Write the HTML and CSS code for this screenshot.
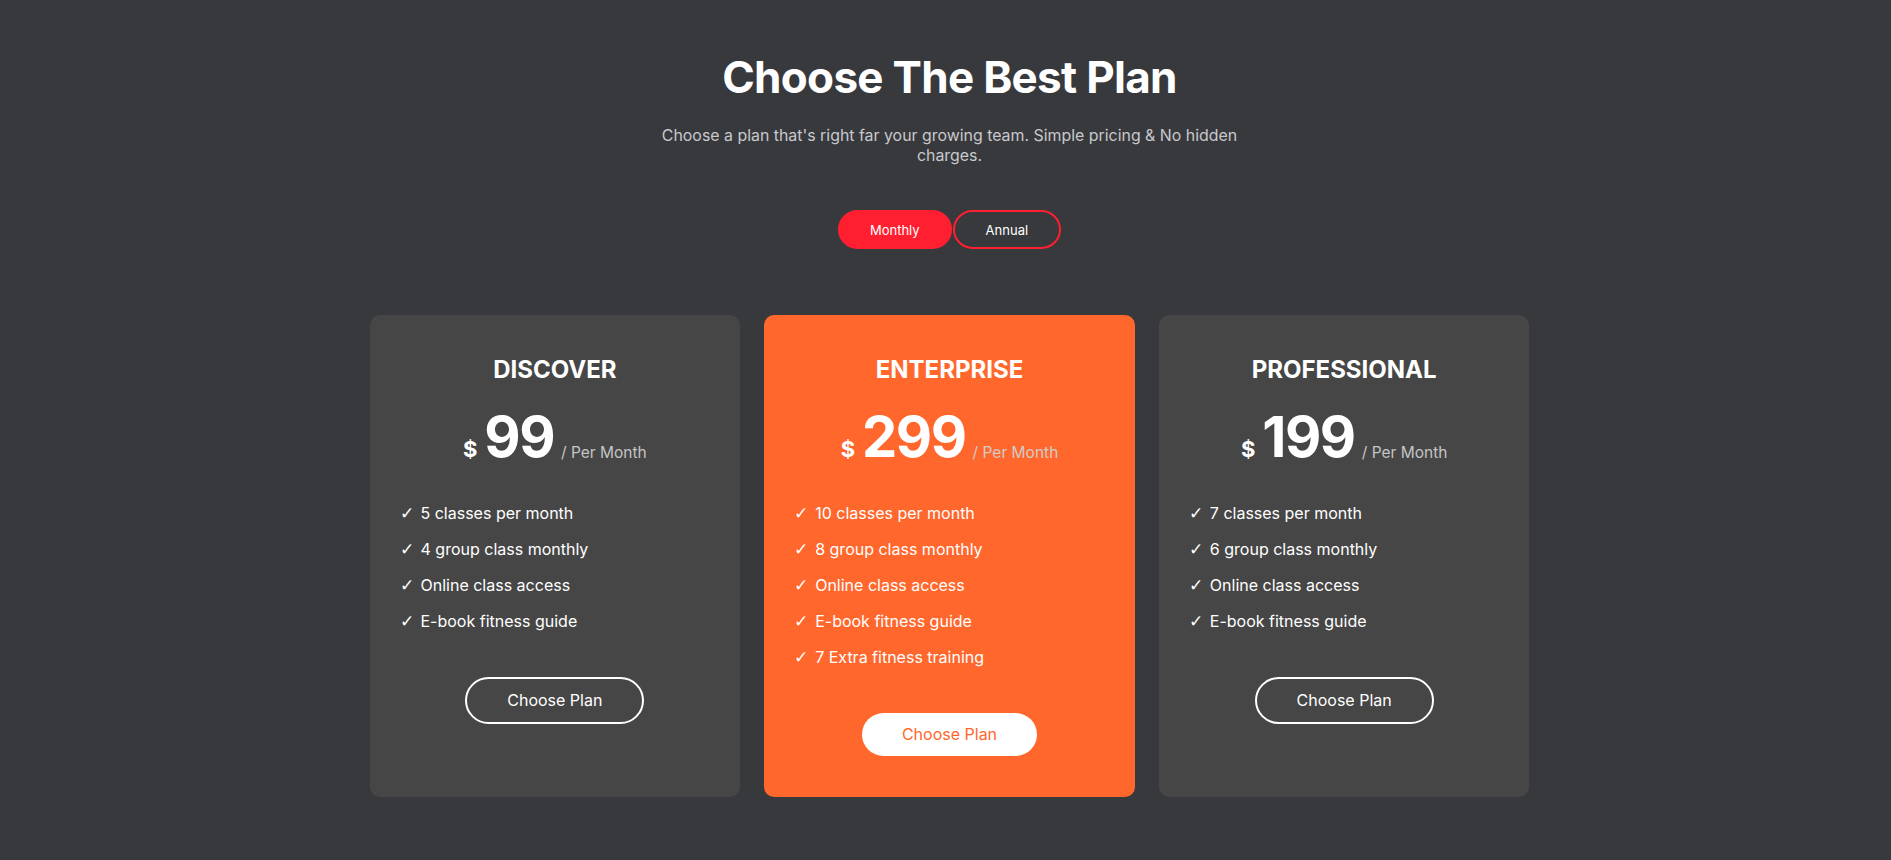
FILE: index.html
```html
<!DOCTYPE html>
<html lang="en">
<head>
<meta charset="utf-8">
<title>Pricing</title>
<link rel="stylesheet" href="styles.css">
</head>
<body>
<main class="page">
  <header class="intro">
    <h1 class="intro-title">Choose The Best Plan</h1>
    <p class="intro-text">Choose a plan that's right far your growing team. Simple pricing &amp; No hidden charges.</p>
    <div class="toggle">
      <button class="toggle-btn is-active">Monthly</button>
      <button class="toggle-btn">Annual</button>
    </div>
  </header>

  <section class="plans">
    <article class="plan">
      <h2 class="plan-name">DISCOVER</h2>
      <div class="plan-price"><span class="currency">$</span><span class="amount">99</span><span class="period">/ Per Month</span></div>
      <ul class="features">
        <li><span class="check">✓</span>5 classes per month</li>
        <li><span class="check">✓</span>4 group class monthly</li>
        <li><span class="check">✓</span>Online class access</li>
        <li><span class="check">✓</span>E-book fitness guide</li>
      </ul>
      <button class="plan-btn">Choose Plan</button>
    </article>

    <article class="plan plan-featured">
      <h2 class="plan-name">ENTERPRISE</h2>
      <div class="plan-price"><span class="currency">$</span><span class="amount">299</span><span class="period">/ Per Month</span></div>
      <ul class="features">
        <li><span class="check">✓</span>10 classes per month</li>
        <li><span class="check">✓</span>8 group class monthly</li>
        <li><span class="check">✓</span>Online class access</li>
        <li><span class="check">✓</span>E-book fitness guide</li>
        <li><span class="check">✓</span>7 Extra fitness training</li>
      </ul>
      <button class="plan-btn">Choose Plan</button>
    </article>

    <article class="plan">
      <h2 class="plan-name">PROFESSIONAL</h2>
      <div class="plan-price"><span class="currency">$</span><span class="amount">199</span><span class="period">/ Per Month</span></div>
      <ul class="features">
        <li><span class="check">✓</span>7 classes per month</li>
        <li><span class="check">✓</span>6 group class monthly</li>
        <li><span class="check">✓</span>Online class access</li>
        <li><span class="check">✓</span>E-book fitness guide</li>
      </ul>
      <button class="plan-btn">Choose Plan</button>
    </article>
  </section>
</main>
</body>
</html>
```

FILE: styles.css
```css
* {
  box-sizing: border-box;
}

html, body {
  margin: 0;
  padding: 0;
  background: #38393d;
}

body {
  font-family: Inter, "Noto Sans", "Liberation Sans", sans-serif;
  color: #ffffff;
  min-height: 860px;
}

.page {
  padding: 51px 0 40px 8px;
}

.intro {
  display: flex;
  flex-direction: column;
  align-items: center;
  text-align: center;
}

.intro-title {
  margin: 0;
  font-size: 44px;
  font-weight: 700;
  line-height: 53px;
  letter-spacing: -0.7px;
}

.intro-text {
  margin: 22px 0 0;
  max-width: 600px;
  font-size: 15.9px;
  line-height: 19.5px;
  color: #c7c8cc;
}

.toggle {
  display: flex;
  gap: 1px;
  margin-top: 45px;
}

.toggle-btn {
  height: 39px;
  padding: 0 31px;
  border: 2px solid #ff1f30;
  border-radius: 20px;
  background: transparent;
  color: #ffffff;
  font-family: inherit;
  font-size: 13px;
  cursor: pointer;
}

.toggle-btn.is-active {
  background: #ff1f30;
  padding: 0 30px;
}

.plans {
  display: grid;
  grid-template-columns: repeat(3, 1fr);
  gap: 24px;
  max-width: 1160px;
  margin: 66px auto 0;
}

.plan {
  display: flex;
  flex-direction: column;
  align-items: center;
  padding: 40px 30px 41px;
  background: #464646;
  border-radius: 10px;
}

.plan-featured {
  background: #ff672d;
}

.plan-name {
  margin: 0;
  font-size: 24px;
  font-weight: 700;
  line-height: 29px;
}

.plan-price {
  display: flex;
  align-items: baseline;
  margin-top: 19px;
  line-height: 68px;
}

.currency {
  font-size: 22px;
  font-weight: 700;
  margin-right: 7px;
}

.amount {
  font-size: 56px;
  font-weight: 700;
  letter-spacing: -1.5px;
  margin-right: 7px;
}

.period {
  font-size: 15.5px;
  color: #c4c4c4;
  position: relative;
  top: 1px;
}

.plan-featured .period {
  color: #d2cbc6;
}

.features {
  align-self: stretch;
  list-style: none;
  margin: 15px 0 0;
  padding: 0;
  display: flex;
  flex-direction: column;
  gap: 12px;
}

.features li {
  font-size: 16px;
  line-height: 24px;
}

.check {
  display: inline-block;
  width: 21px;
  font-family: "DejaVu Sans", sans-serif;
  font-size: 17px;
  font-weight: 300;
  line-height: 1;
}

.plan-btn {
  margin-top: 44px;
  padding: 12px 40px;
  border: 2px solid #ffffff;
  border-radius: 24px;
  background: transparent;
  color: #ffffff;
  font-family: inherit;
  font-size: 16px;
  line-height: 19px;
  cursor: pointer;
}

.plan-featured .plan-btn {
  border: none;
  background: #ffffff;
  color: #ff672d;
}
```
